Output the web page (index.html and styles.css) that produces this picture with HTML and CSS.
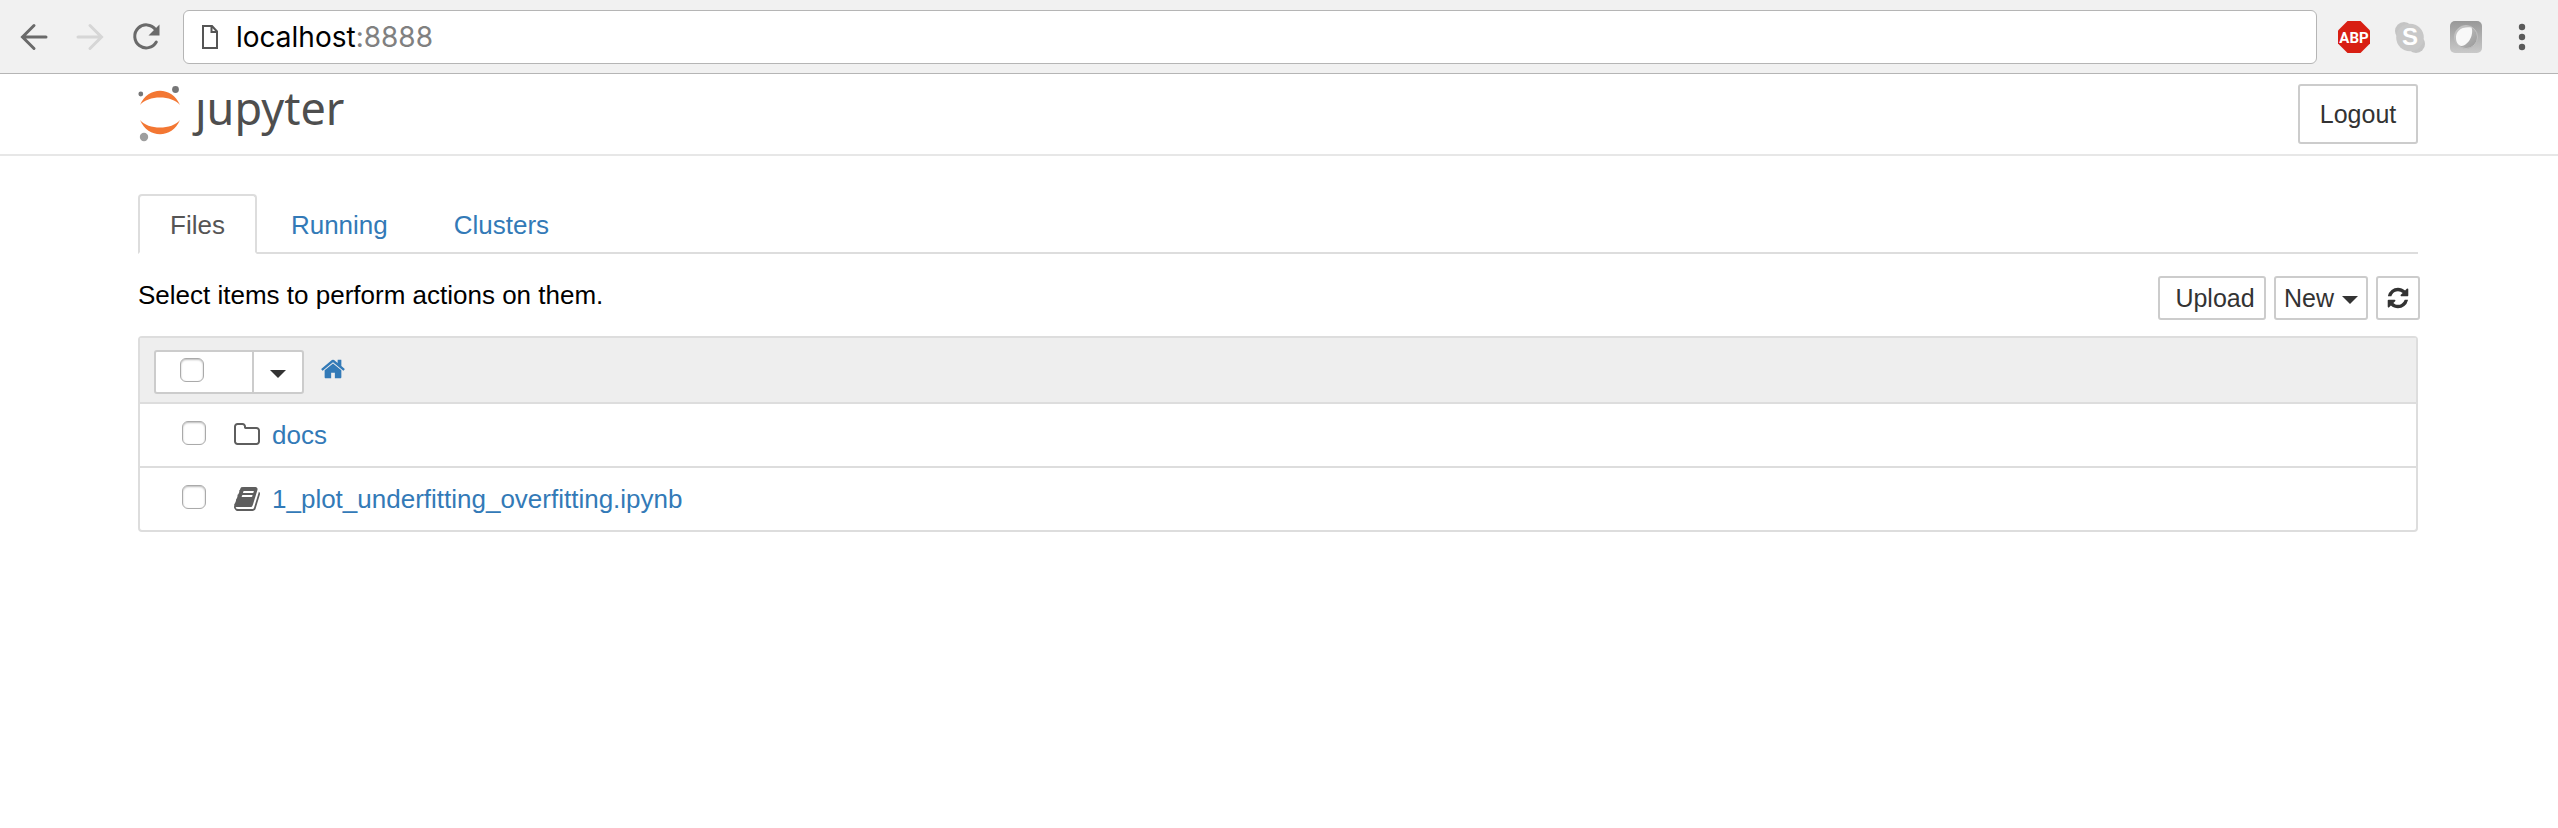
FILE: index.html
```html
<!DOCTYPE html>
<html lang="en">
<head>
<meta charset="utf-8">
<title>Home</title>
<link rel="stylesheet" href="styles.css">
</head>
<body>
<div class="toolbar">
  <nav class="nav-buttons">
    <button class="tool" aria-label="Back"><svg width="28" height="28" viewBox="0 0 28 28"><path d="M26 14H3M14 2.500L2.500 14L14 25.500" fill="none" stroke="#6a6a6a" stroke-width="3" stroke-linecap="round" stroke-linejoin="miter"/></svg></button>
    <button class="tool" aria-label="Forward"><svg width="28" height="28" viewBox="0 0 28 28"><path d="M2 14h23M14 2.500L25.500 14L14 25.500" fill="none" stroke="#d6d6d6" stroke-width="3" stroke-linecap="round"/></svg></button>
    <button class="tool" aria-label="Reload"><svg width="28" height="28" viewBox="0 0 28 28"><path d="M23.500 6.500A11.500 11.500 0 1 0 24.300 19" fill="none" stroke="#6a6a6a" stroke-width="3" stroke-linecap="round"/><path d="M27.500 1.500v11H16.500z" fill="#6a6a6a"/></svg></button>
  </nav>
  <div class="address">
    <svg width="16" height="24" viewBox="0 0 16 24"><path d="M1 1h9l5 5.500V23H1zM9.500 1v6H15" fill="none" stroke="#555" stroke-width="2"/></svg>
    <div class="url" role="textbox" aria-label="Address"><span>localhost</span><span class="port">:8888</span></div>
  </div>
  <div class="extensions">
    <button class="tool" aria-label="Adblock Plus"><svg width="32" height="32" viewBox="0 0 32 32"><path d="M9.500 0h13L32 9.500v13L22.500 32h-13L0 22.500v-13z" fill="#d81f13"/><text x="16" y="22" text-anchor="middle" class="abp">ABP</text></svg></button>
    <button class="tool" aria-label="Skype"><svg width="32" height="32" viewBox="0 0 32 32"><circle cx="10" cy="10" r="9" fill="#c4c4c4"/><circle cx="22" cy="23" r="9" fill="#c4c4c4"/><circle cx="16" cy="16.500" r="13.800" fill="#c8c8c8"/><text x="16" y="24" text-anchor="middle" class="skype">S</text></svg></button>
    <button class="tool" aria-label="Extension"><svg width="32" height="32" viewBox="0 0 32 32"><defs><linearGradient id="tile" x2="0" y2="1"><stop offset="0" stop-color="#989898"/><stop offset="1" stop-color="#c9c9c9"/></linearGradient><linearGradient id="disc" x2="1" y2="1"><stop offset="0" stop-color="#ccc"/><stop offset="1" stop-color="#979797"/></linearGradient></defs><rect width="32" height="32" rx="5" fill="url(#tile)"/><circle cx="16" cy="16" r="11.500" fill="url(#disc)" stroke="#c2c2c2"/><path d="M6 18C5 10 12 5 21.500 6.500C24 13 19 24 11.500 25C8 24.500 6.500 22 6 18z" fill="#f8f8f8"/></svg></button>
    <button class="tool menu" aria-label="Menu"><svg width="8" height="28" viewBox="0 0 8 28"><g fill="#5a5a5a"><circle cx="4" cy="4" r="3.200"/><circle cx="4" cy="14" r="3.200"/><circle cx="4" cy="24" r="3.200"/></g></svg></button>
  </div>
</div>
<header class="header">
  <a class="logo" href="#">
    <svg width="44" height="58" viewBox="0 0 44 58"><g fill="#f37733"><path d="M2 19C10 0 34 0 42 19C34 9 10 9 2 19z"/><path d="M2 34C10 53 34 53 42 34C34 44 10 44 2 34z"/></g><circle cx="2.800" cy="8" r="2.400" fill="#767677"/><circle cx="37.500" cy="3.500" r="3.400" fill="#767677"/><circle cx="6" cy="51" r="4.200" fill="#9e9e9e"/></svg>
    <span>ȷupyter</span>
  </a>
  <button class="btn logout">Logout</button>
</header>
<main class="page">
  <nav class="tabs">
    <a class="tab active" href="#files">Files</a>
    <a class="tab" href="#running">Running</a>
    <a class="tab" href="#clusters">Clusters</a>
  </nav>
  <div class="actions">
    <p class="hint">Select items to perform actions on them.</p>
    <div class="buttons">
      <button class="btn upload">Upload</button>
      <button class="btn new">New <span class="caret"></span></button>
      <button class="btn refresh" aria-label="Refresh"><svg width="24" height="24" viewBox="0 0 1792 1792"><path fill="#333" d="M1639 1056q0 5-1 7-64 268-268 434.500t-478 166.500q-146 0-282.500-55t-243.500-157l-129 129q-19 19-45 19t-45-19-19-45v-448q0-26 19-45t45-19h448q26 0 45 19t19 45-19 45l-137 137q71 66 161 102t187 36q134 0 250-65t186-179q11-17 53-117 8-23 30-23h192q13 0 22.500 9.500t9.500 22.500zm25-800v448q0 26-19 45t-45 19h-448q-26 0-45-19t-19-45 19-45l138-138q-148-137-349-137-134 0-250 65t-186 179q-11 17-53 117-8 23-30 23h-199q-13 0-22.500-9.500t-9.500-22.500v-7q65-268 270-434.500t480-166.500q146 0 284 55.500t245 156.500l130-129q19-19 45-19t45 19 19 45z"/></svg></button>
    </div>
  </div>
  <section class="list">
    <div class="list-head">
      <div class="selector">
        <label class="select-all"><input type="checkbox" class="check" aria-label="Select all"></label>
        <button class="select-menu" aria-label="Select by type"><span class="caret"></span></button>
      </div>
      <a class="home" href="#" aria-label="Home"><svg width="26" height="26" viewBox="0 0 1792 1792"><path fill="#337ab7" d="M1472 992v480q0 26-19 45t-45 19h-384v-384h-256v384h-384q-26 0-45-19t-19-45v-480q0-1 .5-3t.5-3l575-474 575 474q1 2 1 6zm223-69l-62 74q-8 9-21 11h-3q-13 0-21-7l-692-577-692 577q-12 8-24 7-13-2-21-11l-62-74q-8-10-7-23.500t11-21.500l719-599q32-26 76-26t76 26l244 204v-195q0-14 9-23t23-9h192q14 0 23 9t9 23v408l219 182q10 8 11 21.500t-7 23.500z"/></svg></a>
    </div>
    <div class="row">
      <input type="checkbox" class="check" aria-label="docs">
      <svg class="kind" width="28" height="28" viewBox="0 0 1792 1792"><path fill="#5e5e5e" d="M1600 1312v-704q0-40-28-68t-68-28h-704q-40 0-68-28t-28-68v-64q0-40-28-68t-68-28h-320q-40 0-68 28t-28 68v960q0 40 28 68t68 28h1216q40 0 68-28t28-68zm128-704v704q0 92-66 158t-158 66h-1216q-92 0-158-66t-66-158v-960q0-92 66-158t158-66h320q92 0 158 66t66 158v32h672q92 0 158 66t66 158z"/></svg>
      <a href="#docs">docs</a>
    </div>
    <div class="row">
      <input type="checkbox" class="check" aria-label="1_plot_underfitting_overfitting.ipynb">
      <svg class="kind" width="28" height="28" viewBox="0 0 1792 1792"><path fill="#5e5e5e" d="M1703 478q40 57 18 129l-275 906q-19 64-76.500 107.500t-122.500 43.500h-923q-77 0-148.500-53.500t-99.500-131.500q-24-67-2-127 0-4 3-27t4-37q1-8-3-21.500t-3-19.500q2-11 8-21t16.500-23.500 16.500-23.500q23-38 45-91.500t30-91.500q3-10 .5-30t-.5-28q3-11 17-28t17-23q21-36 42-92t25-90q1-9-2.500-32t.5-28q4-13 22-30.500t22-22.500q19-26 42.500-84.500t27.500-96.500q1-8-3-25.500t-2-26.500q2-8 9-18t18-23 17-21q8-12 16.500-30.500t15-35 16-36 19.500-32 26.500-23.500 36-11.500 47.500 5.500l-1 3q38-9 51-9h761q74 0 114 56t18 130l-274 906q-36 119-71.500 153.500t-128.500 34.500h-869q-27 0-38 15-11 16-1 43 24 70 144 70h923q29 0 56-15.500t35-41.500l300-987q7-22 5-57 38 15 59 43zm-1064 2q-4 13 2 22.500t20 9.500h608q13 0 25.500-9.500t16.500-22.500l21-64q4-13-2-22.500t-20-9.500h-608q-13 0-25.500 9.500t-16.500 22.500zm-83 256q-4 13 2 22.500t20 9.500h608q13 0 25.500-9.500t16.500-22.500l21-64q4-13-2-22.500t-20-9.500h-608q-13 0-25.500 9.500t-16.500 22.500z"/></svg>
      <a href="#notebook">1_plot_underfitting_overfitting.ipynb</a>
    </div>
  </section>
</main>
</body>
</html>
```

FILE: styles.css
```css
* { box-sizing: border-box; }

body {
  margin: 0;
  background: #fff;
  color: #000;
  font: 26px/36px "Liberation Sans", Arial, sans-serif;
}

a { color: #337ab7; text-decoration: none; }
svg { display: block; overflow: visible; }
button { font: inherit; color: #333; cursor: pointer; }

/* Browser toolbar */
.toolbar {
  display: flex;
  align-items: center;
  height: 74px;
  padding: 0 32px 0 20px;
  background: #f1f1f1;
  border-bottom: 1px solid #b5b5b5;
}
.tool { padding: 0; border: 0; background: none; }
.nav-buttons { display: flex; gap: 28px; margin-right: 23px; }
.address {
  flex: 1;
  display: flex;
  align-items: center;
  gap: 18px;
  height: 54px;
  padding: 0 18px;
  background: #fff;
  border: 1px solid #b5b5b5;
  border-radius: 6px;
}
.url { font: 28px/36px Inter, Roboto, sans-serif; }
.port { color: #808080; }
.extensions { display: flex; align-items: center; gap: 24px; margin-left: 21px; }
.menu { margin-left: 12px; }
.abp { font: bold 15px Roboto, sans-serif; fill: #fff; }
.skype { font: bold 24px "Liberation Sans", sans-serif; fill: #fff; }

/* Page header */
.header {
  display: flex;
  justify-content: space-between;
  align-items: flex-start;
  height: 82px;
  padding: 10px 140px 0 138px;
  border-bottom: 2px solid #e7e7e7;
}
.logo { display: flex; align-items: flex-start; gap: 13px; padding-top: 2px; }
.logo span { font: 45px/44px "Noto Sans", sans-serif; color: #4e4e4e; }

.btn {
  display: flex;
  align-items: center;
  justify-content: center;
  background: #fff;
  border: 2px solid #ccc;
  border-radius: 3px;
  padding: 0 10px;
  height: 44px;
  font-size: 25px;
}
.logout { height: 60px; width: 120px; }
.caret {
  margin-top: 3px;
  border-top: 8px solid #333;
  border-left: 8px solid transparent;
  border-right: 8px solid transparent;
}

/* Tabs */
.page { padding: 38px 140px 0 138px; }
.tabs { display: flex; gap: 2px; border-bottom: 2px solid #ddd; }
.tab {
  height: 60px;
  padding: 11px 30px;
  margin-bottom: -2px;
  border: 2px solid transparent;
  border-radius: 4px 4px 0 0;
}
.tab.active { color: #555; background: #fff; border-color: #ddd; border-bottom-color: #fff; }

/* Action bar */
.actions { display: flex; justify-content: space-between; padding-top: 22px; margin-right: -2px; }
.hint { margin: 1px 0 0; }
.buttons { display: flex; gap: 8px; }
.upload { width: 108px; padding: 0 10px 0 16px; }
.new { width: 94px; gap: 8px; }
.refresh { width: 44px; padding: 0; }

/* File list */
.list { margin-top: 16px; border: 2px solid #ddd; border-radius: 4px; }
.list-head { display: flex; align-items: center; height: 64px; padding: 4px 0 0 14px; gap: 16px; background: #eee; }
.selector { display: flex; height: 44px; background: #fff; border: 2px solid #ccc; border-radius: 3px; }
.select-all { display: flex; align-items: center; width: 98px; padding-left: 24px; border-right: 2px solid #ccc; }
.select-menu {
  display: flex;
  align-items: center;
  justify-content: center;
  width: 48px;
  padding: 0;
  border: 0;
  background: none;
}
.home { padding-bottom: 6px; }
.row { display: flex; align-items: center; height: 64px; padding-left: 42px; border-top: 2px solid #ddd; }
.kind { margin: 0 11px 0 27px; }
.check {
  appearance: none;
  width: 24px;
  height: 24px;
  margin: 0 0 4px;
  background: #fff;
  border: 1px solid #aaa;
  border-radius: 6px;
  box-shadow: inset 0 1px 2px #bbb;
}
```
